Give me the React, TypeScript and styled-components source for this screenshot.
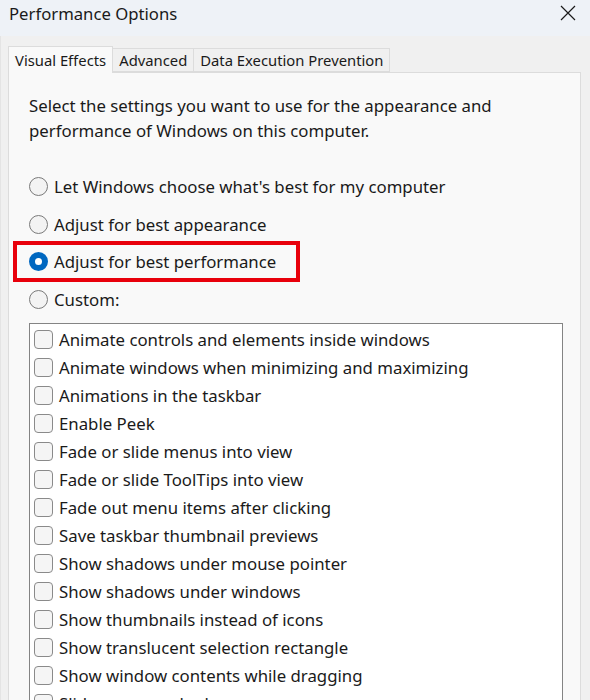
import React from "react";
import styled, { createGlobalStyle } from "styled-components";

const Global = createGlobalStyle`
  html, body { margin: 0; padding: 0; background: #f0f0f0; }
  body { font-family: "Noto Sans", "Open Sans", sans-serif; color: #1a1a1a; }
  * { box-sizing: border-box; }
`;

const Window = styled.div`
  width: 590px;
  height: 700px;
  overflow: hidden;
  display: flex;
  flex-direction: column;
  background: #f0f0f0;
`;

const TitleBar = styled.div`
  height: 36px;
  flex: none;
  background: #eef2f7;
  display: flex;
  align-items: center;
  justify-content: space-between;
  padding: 0 13px 10px 9px;
`;

const Title = styled.div`
  font-size: 16.7px;
  color: #1a1a1a;
`;

const Close = styled.div`
  width: 18px;
  height: 18px;
  display: flex;
  align-items: center;
  justify-content: center;
`;

const Body = styled.div`
  flex: 1;
  display: flex;
  flex-direction: column;
  padding: 10px 9px 0 7px;
  background: #f0f0f0;
  border-left: 1px solid #e4e4e4;
`;

const TabRow = styled.div`
  display: flex;
  align-items: flex-end;
  height: 26px;
  flex: none;
`;

const Tab = styled.div<{ $active?: boolean }>`
  height: ${(p) => (p.$active ? "27px" : "24px")};
  padding: 0 6px;
  font-size: 14.8px;
  display: flex;
  align-items: center;
  background: ${(p) => (p.$active ? "#f9f9f9" : "#f0f0f0")};
  border: 1px solid #dcdcdc;
  border-bottom: ${(p) => (p.$active ? "none" : "1px solid #dcdcdc")};
  margin-left: ${(p) => (p.$active ? "0" : "-1px")};
  margin-bottom: ${(p) => (p.$active ? "-1px" : "0")};
  position: relative;
  z-index: ${(p) => (p.$active ? 1 : 0)};
  color: #1a1a1a;
`;

const Panel = styled.div`
  flex: 1;
  background: #f9f9f9;
  border: 1px solid #dcdcdc;
  border-bottom: none;
  padding: 20px 17px 0 20px;
  display: flex;
  flex-direction: column;
`;

const Intro = styled.p`
  margin: 0;
  font-size: 16.8px;
  line-height: 25px;
  color: #1a1a1a;
`;

const RadioGroup = styled.div`
  display: flex;
  flex-direction: column;
  margin-top: 24px;
`;

const RadioRow = styled.div<{ $highlight?: boolean }>`
  height: ${(p) => (p.$highlight ? "41px" : "38px")};
  display: flex;
  align-items: center;
  gap: 6px;
  font-size: 16.8px;
  ${(p) =>
    p.$highlight
      ? `border: 4px solid #e8000b; margin: -2px 263px -2px -16px; padding-left: 12px;`
      : ``}
`;

const RadioCircle = styled.span<{ $checked?: boolean }>`
  width: 19px;
  height: 19px;
  border-radius: 50%;
  flex: none;
  ${(p) =>
    p.$checked
      ? `background: #ffffff; border: 6px solid #0067c0;`
      : `background: #f3f3f3; border: 1px solid #7a7a7a;`}
`;

const ListBox = styled.div`
  margin-top: 5px;
  flex: 1;
  background: #ffffff;
  border: 1px solid #848484;
  border-bottom: none;
  padding: 1px 4px 0 4px;
  display: flex;
  flex-direction: column;
  width: 534px;
`;

const CheckRow = styled.div`
  height: 28px;
  flex: none;
  display: flex;
  align-items: center;
  gap: 6px;
  font-size: 16.8px;
  white-space: nowrap;
`;

const CheckBox = styled.span`
  width: 19px;
  height: 19px;
  flex: none;
  border: 1px solid #8a8a8a;
  border-radius: 4px;
  background: #f5f5f5;
`;

const items = [
  "Animate controls and elements inside windows",
  "Animate windows when minimizing and maximizing",
  "Animations in the taskbar",
  "Enable Peek",
  "Fade or slide menus into view",
  "Fade or slide ToolTips into view",
  "Fade out menu items after clicking",
  "Save taskbar thumbnail previews",
  "Show shadows under mouse pointer",
  "Show shadows under windows",
  "Show thumbnails instead of icons",
  "Show translucent selection rectangle",
  "Show window contents while dragging",
  "Slide open combo boxes",
];

const radios = [
  { label: "Let Windows choose what's best for my computer" },
  { label: "Adjust for best appearance" },
  { label: "Adjust for best performance", checked: true },
  { label: "Custom:" },
];

export default function App() {
  return (
    <Window>
      <Global />
      <TitleBar>
        <Title>Performance Options</Title>
        <Close>
          <svg width="16" height="16" viewBox="0 0 16 16">
            <path d="M1 1 L15 15 M15 1 L1 15" stroke="#1a1a1a" strokeWidth="1.2" fill="none" />
          </svg>
        </Close>
      </TitleBar>
      <Body>
        <TabRow>
          <Tab $active>Visual Effects</Tab>
          <Tab>Advanced</Tab>
          <Tab>Data Execution Prevention</Tab>
        </TabRow>
        <Panel>
          <Intro>
            Select the settings you want to use for the appearance and
            <br />
            performance of Windows on this computer.
          </Intro>
          <RadioGroup>
            {radios.map((r) => (
              <RadioRow key={r.label} $highlight={r.checked}>
                <RadioCircle $checked={r.checked} />
                <span>{r.label}</span>
              </RadioRow>
            ))}
          </RadioGroup>
          <ListBox>
            {items.map((t) => (
              <CheckRow key={t}>
                <CheckBox />
                <span>{t}</span>
              </CheckRow>
            ))}
          </ListBox>
        </Panel>
      </Body>
    </Window>
  );
}
